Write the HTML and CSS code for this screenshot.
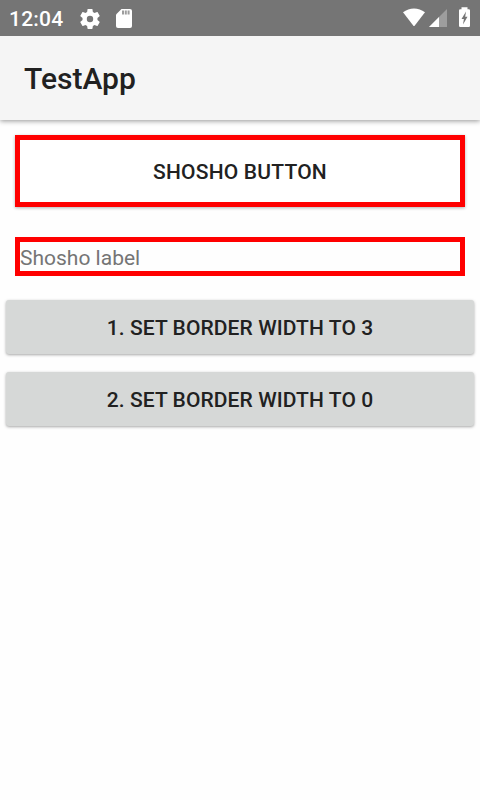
FILE: index.html
```html
<!DOCTYPE html>
<html lang="en">
<head>
<meta charset="utf-8">
<title>TestApp</title>
<link rel="stylesheet" href="styles.css">
</head>
<body>
<div class="status-bar">
  <span class="clock">12:04</span>
  <svg class="gear" width="24" height="24" viewBox="0 0 24 24" fill="#fff"><path d="M19.43 12.98c.04-.32.07-.64.07-.98s-.03-.66-.07-.98l2.11-1.65c.19-.15.24-.42.12-.64l-2-3.46c-.12-.22-.39-.3-.61-.22l-2.49 1c-.52-.4-1.08-.73-1.69-.98l-.38-2.65C14.46 2.18 14.25 2 14 2h-4c-.25 0-.46.18-.49.42l-.38 2.65c-.61.25-1.17.59-1.69.98l-2.49-1c-.23-.09-.49 0-.61.22l-2 3.46c-.13.22-.07.49.12.64l2.11 1.65c-.04.32-.07.65-.07.98s.03.66.07.98l-2.11 1.65c-.19.15-.24.42-.12.64l2 3.46c.12.22.39.3.61.22l2.49-1c.52.4 1.08.73 1.69.98l.38 2.65c.03.24.24.42.49.42h4c.25 0 .46-.18.49-.42l.38-2.65c.61-.25 1.17-.59 1.69-.98l2.49 1c.23.09.49 0 .61-.22l2-3.46c.12-.22.07-.49-.12-.64l-2.11-1.65zM12 15.2a3.200 3.200 0 1 1 0-6.400 3.200 3.200 0 0 1 0 6.400z"/></svg>
  <svg class="card-icon" width="24" height="24" viewBox="0 0 24 24"><path fill="#fff" d="M9.500 2h8.500q2 0 2 2v15q0 2-2 2H6q-2 0-2-2V7.500z"/><path fill="#757575" fill-opacity=".7" d="M10 3.500h2v4h-2zM12.800 3.500h2v4h-2zM15.600 3.500h2v4h-2z"/></svg>
  <svg class="system-icons" width="72" height="24" viewBox="0 0 72 24">
    <path fill="#fff" d="M3 6.300C9.500 1.100 18.500 1.100 25 6.300L14.800 19.600Q14 20.600 13.200 19.600Z"/>
    <path fill="#fff" fill-opacity=".3" d="M47 3V21H29Z"/>
    <path fill="#fff" d="M39 11V21H29Z"/>
    <path fill="#fff" d="M61.500 1.200h6v2h1.300q1.200 0 1.200 1.200v15.400q0 1.200-1.200 1.200h-8.600q-1.200 0-1.200-1.200V4.400q0-1.200 1.200-1.200H61.500z"/>
    <path fill="#757575" d="M66 5.500l-4.500 7.500h2.400L63 18.500l4.500-7.700h-2.300z"/>
  </svg>
</div>
<header class="app-bar"><h1>TestApp</h1></header>
<main>
  <button class="outlined">SHOSHO BUTTON</button>
  <div class="label">Shosho label</div>
  <button class="raised">1. SET BORDER WIDTH TO 3</button>
  <button class="raised">2. SET BORDER WIDTH TO 0</button>
</main>
</body>
</html>
```
FILE: styles.css
```css
* { box-sizing: border-box; }
body {
  margin: 0;
  min-height: 800px;
  background: #fefefe;
  font-family: Roboto, "Liberation Sans", sans-serif;
  color: #212121;
}
.status-bar {
  position: relative;
  display: flex;
  align-items: center;
  height: 36px;
  padding: 0 8px 0 9px;
  background: #757575;
}
.clock {
  width: 69px;
  padding-top: 2px;
  color: #fff;
  font-size: 21px;
  font-weight: 500;
  line-height: 36px;
  letter-spacing: .2px;
}
.card-icon { margin-left: 9.500px; }
.gear, .card-icon { margin-top: 1px; }
.system-icons { margin-left: auto; }
.app-bar {
  display: flex;
  align-items: center;
  height: 84px;
  padding-left: 24px;
  background: #f5f5f5;
  box-shadow: 0 1px 5px rgba(0, 0, 0, .42);
}
h1 {
  margin: 0;
  font-size: 30px;
  font-weight: 500;
}
main {
  display: flex;
  flex-direction: column;
  padding: 15px 6px;
}
button {
  font: 500 21px Roboto, "Liberation Sans", sans-serif;
  color: #212121;
  border: 0;
  padding: 2px 0 0;
}
.outlined {
  height: 72px;
  margin: 0 9px 30px;
  border: 5px solid #f00;
  background: #fff;
  box-shadow: 0 1px 3px rgba(0, 0, 0, .3);
  letter-spacing: .2px;
}
.label {
  height: 39px;
  margin: 0 9px 24px;
  border: 5px solid #f00;
  font-size: 21px;
  line-height: 33px;
  color: #757575;
}
.raised {
  height: 54px;
  margin-bottom: 18px;
  border-radius: 3px;
  background: #d6d8d7;
  box-shadow: 0 1px 3px rgba(0, 0, 0, .35);
  letter-spacing: .09px;
}
```
